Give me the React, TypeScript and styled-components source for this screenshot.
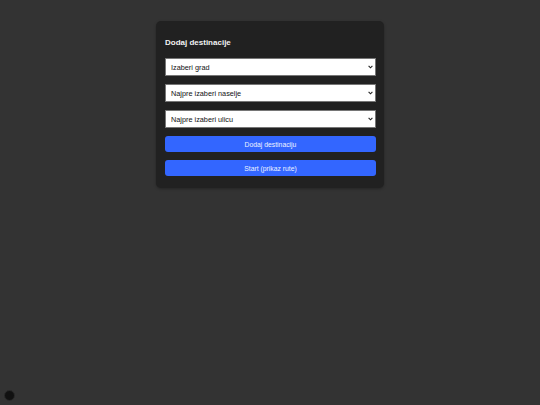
import React, { useState } from 'react';
import styled, { createGlobalStyle } from 'styled-components';

const GlobalStyle = createGlobalStyle`
  html, body {
    margin: 0;
    padding: 0;
    background: #333333;
    font-family: Arial, "Liberation Sans", sans-serif;
  }
  body {
    min-height: 405px;
  }
`;

const Page = styled.div`
  position: relative;
  min-height: 405px;
  padding-top: 21px;
  box-sizing: border-box;
`;

const Panel = styled.div`
  width: 228px;
  margin: 0 auto;
  box-sizing: border-box;
  padding: 17px 8px 12px 9px;
  background: #212121;
  border-radius: 5px;
  box-shadow: 0 1px 3px rgba(0, 0, 0, 0.3);
  display: flex;
  flex-direction: column;
  gap: 8px;
`;

const Title = styled.h3`
  margin: 0 0 2px;
  font-size: 8px;
  line-height: 10px;
  font-weight: bold;
  color: #f2f2f2;
`;

const SelectWrap = styled.div`
  position: relative;
  height: 18px;
`;

const Select = styled.select`
  appearance: none;
  -webkit-appearance: none;
  display: block;
  width: 100%;
  height: 18px;
  box-sizing: border-box;
  margin: 0;
  padding: 0 10px 0 5px;
  border: 1px solid #767676;
  border-radius: 0;
  background: #ffffff;
  color: #111111;
  font-family: Arial, "Liberation Sans", sans-serif;
  font-size: 7.3px;
  outline: none;
`;

const Chevron = styled.svg`
  position: absolute;
  right: 3px;
  top: 7px;
  width: 5px;
  height: 4px;
  pointer-events: none;
`;

const Button = styled.button`
  width: 100%;
  height: 16px;
  box-sizing: border-box;
  margin: 0;
  padding: 0;
  border: none;
  border-radius: 3px;
  background: #3366ff;
  color: #eef2ff;
  font-family: Arial, "Liberation Sans", sans-serif;
  font-size: 6.8px;
  cursor: pointer;
`;

const Dot = styled.div`
  position: absolute;
  left: 4px;
  bottom: 4px;
  width: 9px;
  height: 9px;
  border-radius: 50%;
  background: #111111;
  border: 1px solid #2a2a2a;
`;

function Dropdown({ label }: { label: string }) {
  const [value, setValue] = useState('');
  return (
    <SelectWrap>
      <Select value={value} onChange={e => setValue(e.target.value)}>
        <option value="">{label}</option>
      </Select>
      <Chevron viewBox="0 0 5 4">
        <path d="M0.6 0.8 L2.5 2.8 L4.4 0.8" fill="none" stroke="#222" strokeWidth="1.1" />
      </Chevron>
    </SelectWrap>
  );
}

export default function App() {
  return (
    <Page>
      <GlobalStyle />
      <Panel>
        <Title>Dodaj destinacije</Title>
        <Dropdown label="Izaberi grad" />
        <Dropdown label="Najpre izaberi naselje" />
        <Dropdown label="Najpre izaberi ulicu" />
        <Button>Dodaj destinaciju</Button>
        <Button>Start (prikaz rute)</Button>
      </Panel>
      <Dot />
    </Page>
  );
}
